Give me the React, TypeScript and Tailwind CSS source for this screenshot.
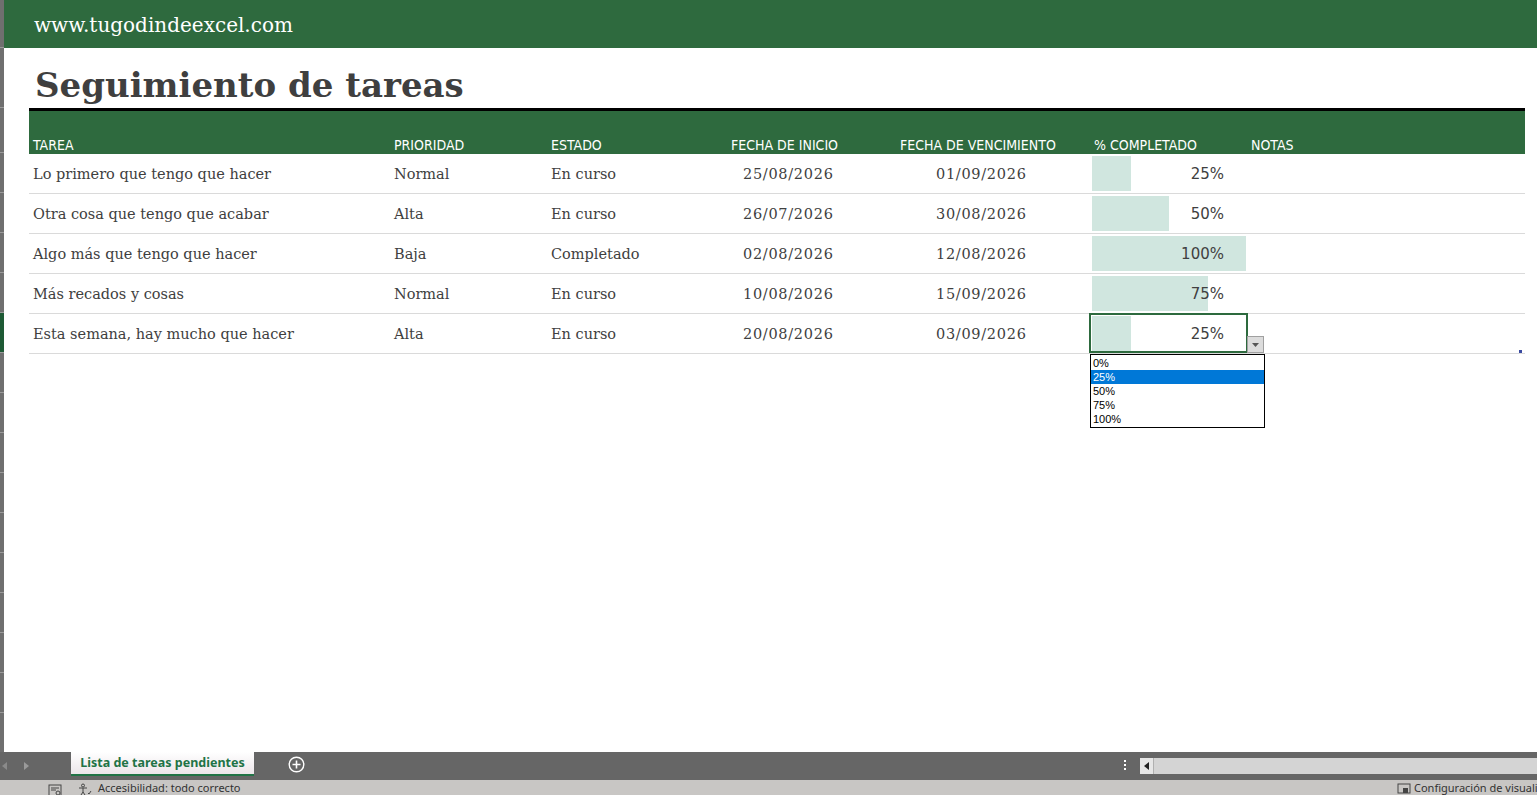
import React from 'react';

const serif = { fontFamily: '"DejaVu Serif", "Liberation Serif", serif' };

interface Task {
  name: string;
  priority: string;
  status: string;
  start: string;
  due: string;
  pct: number;
}

const tasks: Task[] = [
  { name: 'Lo primero que tengo que hacer', priority: 'Normal', status: 'En curso', start: '25/08/2026', due: '01/09/2026', pct: 25 },
  { name: 'Otra cosa que tengo que acabar', priority: 'Alta', status: 'En curso', start: '26/07/2026', due: '30/08/2026', pct: 50 },
  { name: 'Algo más que tengo que hacer', priority: 'Baja', status: 'Completado', start: '02/08/2026', due: '12/08/2026', pct: 100 },
  { name: 'Más recados y cosas', priority: 'Normal', status: 'En curso', start: '10/08/2026', due: '15/09/2026', pct: 75 },
  { name: 'Esta semana, hay mucho que hacer', priority: 'Alta', status: 'En curso', start: '20/08/2026', due: '03/09/2026', pct: 25 },
];

const options = ['0%', '25%', '50%', '75%', '100%'];

function RowGutter() {
  // row headers of the sheet, cut down to a thin strip
  const rows = [48, 60, 45, 40, 40, 40, 40, 40, 40, 40, 40, 40, 40, 40, 40, 40, 40, 40];
  return (
    <div className="w-[4px] shrink-0 bg-[#6f6f6f] flex flex-col">
      {rows.map((h, i) => (
        <div
          key={i}
          style={{ height: h }}
          className={`shrink-0 border-b border-[#9a9a9a] ${i === 7 ? 'bg-[#1e5a35]' : ''}`}
        />
      ))}
    </div>
  );
}

function TaskRow({ task, selected }: { task: Task; selected: boolean }) {
  return (
    <div className="flex h-[40px] border-b border-[#dadada] text-[14.5px] text-[#404040]" style={serif}>
      <div className="w-[361px] pl-[4px] pt-[2px] flex items-center">{task.name}</div>
      <div className="w-[157px] pl-[4px] pt-[2px] flex items-center">{task.priority}</div>
      <div className="w-[180px] pl-[4px] pt-[2px] flex items-center">{task.status}</div>
      <div className="w-[169px] pl-[16px] pt-[2px] flex items-center tracking-[0.7px]">{task.start}</div>
      <div className="w-[194px] pl-[40px] pt-[2px] flex items-center tracking-[0.7px]">{task.due}</div>
      <div className="w-[158px] relative">
        <div className="absolute left-[2px] top-[2px] bottom-[2px] bg-[#d0e6df]" style={{ width: (154 * task.pct) / 100 }} />
        {selected && <div className="absolute inset-0 -top-px -left-px border-2 border-[#2d6a3e]" />}
        <div
          className="relative h-full flex items-center justify-end pr-[24px] pt-[2px] text-[15px] text-[#404040]"
          style={{ fontFamily: '"DejaVu Sans", "Liberation Sans", sans-serif' }}
        >
          {task.pct}%
        </div>
        {selected && (
          <>
            <div className="absolute left-[157px] top-[22px] w-[17px] h-[17px] bg-[#dcdcdc] border border-[#a0a0a0] flex items-center justify-center z-10">
              <svg width="7" height="4" viewBox="0 0 7 4"><path d="M0 0h7L3.5 4z" fill="#555" /></svg>
            </div>
            <div
              className="absolute left-0 top-[40px] w-[175px] bg-white border border-black z-10 py-px text-[11px] leading-[14px] text-black"
              style={{ fontFamily: '"Liberation Sans", Arial, sans-serif' }}
            >
              {options.map(o => (
                <div key={o} className={`pl-[2px] ${o === '25%' ? 'bg-[#0078d7] text-white' : ''}`}>{o}</div>
              ))}
            </div>
          </>
        )}
      </div>
      <div className="flex-1" />
    </div>
  );
}

export default function App() {
  return (
    <div className="w-[1537px] h-[795px] flex flex-col overflow-hidden bg-white">
      <div className="flex-1 flex min-h-0">
        <RowGutter />
        <div className="flex-1 flex flex-col">
          <div className="h-[48px] bg-[#2e6a3e] flex items-center pl-[30px] pt-[1px]">
            <span className="text-[20px] text-white" style={serif}>www.tugodindeexcel.com</span>
          </div>
          <div className="ml-[25px] w-[1496px]">
            <div className="h-[60px] flex items-end pl-[6px] pb-[6px]">
              <h1 className="text-[34px] font-bold text-[#3f3f3f] leading-none" style={serif}>Seguimiento de tareas</h1>
            </div>
            <div className="h-[3px] bg-black" />
            <div
              className="h-[43px] bg-[#2e6a3e] flex items-end pb-0 text-[14px] leading-[18px] text-white"
              style={{ fontFamily: '"Liberation Sans Narrow", "DejaVu Sans Condensed", sans-serif' }}
            >
              <div className="w-[361px] pl-[4px]">TAREA</div>
              <div className="w-[157px] pl-[4px]">PRIORIDAD</div>
              <div className="w-[180px] pl-[4px]">ESTADO</div>
              <div className="w-[169px] pl-[4px]">FECHA DE INICIO</div>
              <div className="w-[194px] pl-[4px]">FECHA DE VENCIMIENTO</div>
              <div className="w-[157px] pl-[4px]">% COMPLETADO</div>
              <div className="flex-1 pl-[4px]">NOTAS</div>
            </div>
            <div className="relative">
              {tasks.map((t, i) => (
                <TaskRow key={i} task={t} selected={i === tasks.length - 1} />
              ))}
              <div className="absolute right-[3px] bottom-[1px] w-[3px] h-[3px] bg-[#3a4aa0]" />
            </div>
          </div>
        </div>
      </div>

      {/* sheet tabs */}
      <div className="h-[28px] bg-[#666666] flex items-stretch text-white" style={{ fontFamily: '"Noto Sans", "Liberation Sans", sans-serif' }}>
        <div className="w-[71px] flex items-center gap-[16px] pl-[2px]">
          <svg width="6" height="8" viewBox="0 0 6 8"><path d="M5 0v8L0 4z" fill="#8a8a8a" /></svg>
          <svg width="6" height="8" viewBox="0 0 6 8"><path d="M0 0v8l5-4z" fill="#9a9a9a" /></svg>
        </div>
        <div className="w-[183px] mb-[4px] bg-gradient-to-b from-white to-[#ece6ea] border-b-2 border-[#217346] flex items-center justify-center text-[12.5px] font-bold text-[#217346]">
          Lista de tareas pendientes
        </div>
        <div className="w-[84px] flex items-center justify-center pb-[3px]">
          <svg width="17" height="17" viewBox="0 0 17 17">
            <circle cx="8.5" cy="8.5" r="7.3" fill="none" stroke="white" strokeWidth="1.4" />
            <path d="M8.5 4.5v8M4.5 8.5h8" stroke="white" strokeWidth="1.6" />
          </svg>
        </div>
        <div className="flex-1" />
        <div className="w-[30px] flex flex-col items-center justify-center gap-[2px] pb-[3px]">
          <span className="w-[2px] h-[2px] bg-white" />
          <span className="w-[2px] h-[2px] bg-white" />
          <span className="w-[2px] h-[2px] bg-white" />
        </div>
        <div className="w-[397px] my-[6px] bg-[#d4d4d4] flex">
          <div className="w-[14px] h-full bg-[#e6e6e6] border-r border-[#b0b0b0] flex items-center justify-center">
            <svg width="5" height="8" viewBox="0 0 5 8"><path d="M5 0v8L0 4z" fill="#222" /></svg>
          </div>
        </div>
      </div>

      {/* status bar */}
      <div
        className="h-[15px] bg-[#c8c6c4] flex items-start text-[11px] leading-[15px] text-[#333]"
        style={{ fontFamily: '"Noto Sans", "Liberation Sans", sans-serif' }}
      >
        <div className="w-[48px]" />
        <svg width="14" height="12" viewBox="0 0 14 12" className="mt-[4px]">
          <rect x="1" y="1" width="12" height="11" fill="none" stroke="#444" />
          <path d="M3 4h8M3 6h5" stroke="#444" />
          <circle cx="10" cy="9" r="2" fill="none" stroke="#444" />
        </svg>
        <div className="w-[16px]" />
        <svg width="14" height="12" viewBox="0 0 14 12" className="mt-[3px]">
          <circle cx="5" cy="2.5" r="1.5" fill="none" stroke="#444" />
          <path d="M1 5h8M5 5v4l-2 3M5 9l2 3" stroke="#444" fill="none" />
          <path d="M10 10l1 1 2-3" stroke="#444" fill="none" />
        </svg>
        <span className="ml-[6px]">Accesibilidad: todo correcto</span>
        <div className="flex-1" />
        <svg width="14" height="12" viewBox="0 0 14 12" className="mt-[3px]">
          <rect x="1" y="1" width="12" height="9" fill="none" stroke="#444" />
          <rect x="6" y="5" width="5" height="5" fill="#444" />
        </svg>
        <span className="ml-[3px] w-[123px] whitespace-nowrap overflow-hidden">Configuración de visuali</span>
      </div>
    </div>
  );
}
